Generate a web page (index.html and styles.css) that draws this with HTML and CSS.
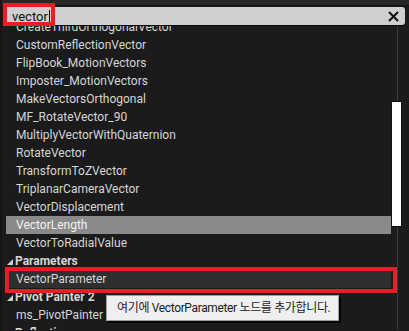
FILE: index.html
```html
<!DOCTYPE html>
<html lang="ko">
<head>
  <meta charset="UTF-8" />
  <title>Material Palette Search</title>
  <link rel="stylesheet" href="styles.css">
</head>
<body>
  <div class="panel">
    <div class="top-strip"></div>
    <div class="search">
      <span class="search-text">vector</span><span class="caret"></span>
      <svg class="clear" width="11" height="11" viewBox="0 0 11 11">
        <path d="M1 1 L10 10 M10 1 L1 10" stroke="#111" stroke-width="2" />
      </svg>
    </div>
    <div class="mark mark-search"></div>

    <div class="body">
      <div class="list">
        <div class="rows">
          <div class="row">CreateThirdOrthogonalVector</div>
          <div class="row">CustomReflectionVector</div>
          <div class="row">FlipBook_MotionVectors</div>
          <div class="row">Imposter_MotionVectors</div>
          <div class="row">MakeVectorsOrthogonal</div>
          <div class="row">MF_RotateVector_90</div>
          <div class="row">MultiplyVectorWithQuaternion</div>
          <div class="row">RotateVector</div>
          <div class="row">TransformToZVector</div>
          <div class="row">TriplanarCameraVector</div>
          <div class="row">VectorDisplacement</div>
          <div class="row selected">VectorLength</div>
          <div class="row">VectorToRadialValue</div>
          <div class="row category"><span class="arrow"></span>Parameters</div>
          <div class="row hovered">VectorParameter</div>
          <div class="row category"><span class="arrow"></span>Pivot Painter 2</div>
          <div class="row">ms_PivotPainter</div>
          <div class="row category"><span class="arrow"></span>Reflection</div>
        </div>
      </div>
      <div class="scrollbar">
        <div class="track"></div>
        <div class="thumb"></div>
      </div>
    </div>

    <div class="mark mark-row"></div>
    <div class="tooltip">여기에 VectorParameter 노드를 추가합니다.</div>
  </div>
</body>
</html>
```

FILE: styles.css
```css
body {
  margin: 0;
  background: #1b1b1b;
  font-family: Roboto, "Noto Sans CJK KR", sans-serif;
  font-size: 12px;
}
.panel {
  position: relative;
  width: 409px;
  height: 331px;
  overflow: hidden;
  background: #1b1b1b;
  border-left: 2px solid #141414;
  box-sizing: border-box;
}
.top-strip {
  height: 5px;
  background: #262626;
  border-bottom: 1px solid #111;
}
.search {
  position: relative;
  z-index: 2;
  display: flex;
  align-items: center;
  height: 18px;
  margin: 1px 4px 0 2px;
  padding: 0 4px 0 8px;
  background: #cfcfcf;
  border-radius: 3px;
  box-shadow: 0 1px 0 #0c0c0c;
}
.search-text {
  font-size: 13px;
  color: #111;
}
.caret {
  width: 1px;
  height: 13px;
  margin-left: 1px;
  background: #111;
}
.clear {
  margin-left: auto;
  margin-right: 2px;
}
.body {
  display: flex;
  height: 305px;
}
.list {
  flex: 1;
  overflow: hidden;
}
.rows {
  margin-top: -7px;
}
.row {
  height: 18px;
  line-height: 18px;
  margin: 0 0 0 4px;
  padding-left: 10px;
  color: #d6d6d6;
  white-space: nowrap;
}
.row.selected {
  background: #8a8a8a;
  color: #f2f2f2;
}
.row.hovered {
  background: #2f2f2f;
}
.row.category {
  font-weight: bold;
  padding-left: 1px;
}
.arrow {
  display: inline-block;
  width: 0;
  height: 0;
  margin-right: 2px;
  border-left: 6px solid transparent;
  border-bottom: 6px solid #cfcfcf;
}
.scrollbar {
  position: relative;
  width: 14px;
  margin-right: 4px;
}
.track {
  width: 1px;
  height: 100%;
  margin-left: 6px;
  background: #3c3c3c;
}
.thumb {
  position: absolute;
  top: 76px;
  left: 0;
  width: 9px;
  height: 124px;
  background: #fff;
  border: 1px solid #111;
}
.mark {
  position: absolute;
  z-index: 3;
  border: 4px solid #ed1c24;
}
.mark-search {
  left: 1px;
  top: 3px;
  width: 44px;
  height: 15px;
}
.mark-row {
  left: 3px;
  top: 267px;
  width: 384px;
  height: 18px;
}
.tooltip {
  position: absolute;
  z-index: 4;
  left: 104px;
  top: 295px;
  height: 24px;
  padding: 0 8px 0 10px;
  line-height: 24px;
  white-space: nowrap;
  letter-spacing: -0.35px;
  background: #efefef;
  border: 1px solid #a0a0a0;
  box-shadow: 2px 2px 0 #050505;
  color: #1c1c1c;
  font-size: 12px;
}
```
